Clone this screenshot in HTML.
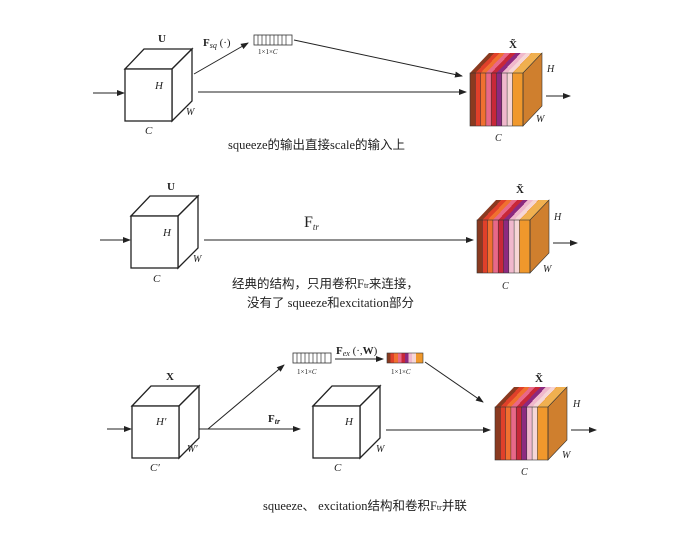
<!DOCTYPE html>
<html><head><meta charset="utf-8"><style>
html,body{margin:0;padding:0;background:#fff;}
svg{display:block;}
.t{font-family:"Liberation Serif",serif;fill:#222;}
.c{font-family:"Liberation Serif","Noto Sans CJK SC",serif;fill:#222;font-size:12.5px;}
</style></head><body>
<svg width="700" height="559" viewBox="0 0 700 559" xmlns="http://www.w3.org/2000/svg">
<defs>
<linearGradient id="st" x1="0" y1="0" x2="1" y2="0">
<stop offset="0" stop-color="#8a3a20"/><stop offset=".1" stop-color="#8a3a20"/>
<stop offset=".1" stop-color="#e0402a"/><stop offset=".2" stop-color="#e0402a"/>
<stop offset=".2" stop-color="#f07030"/><stop offset=".3" stop-color="#f07030"/>
<stop offset=".3" stop-color="#e86888"/><stop offset=".4" stop-color="#e86888"/>
<stop offset=".4" stop-color="#c82838"/><stop offset=".5" stop-color="#c82838"/>
<stop offset=".5" stop-color="#8c2a80"/><stop offset=".6" stop-color="#8c2a80"/>
<stop offset=".6" stop-color="#f0b8cc"/><stop offset=".7" stop-color="#f0b8cc"/>
<stop offset=".7" stop-color="#f6d6d6"/><stop offset=".8" stop-color="#f6d6d6"/>
<stop offset=".8" stop-color="#f0982c"/><stop offset="1" stop-color="#f0982c"/>
</linearGradient>
<g id="cc">
<rect x="0" y="-20" width="53" height="20" fill="url(#st)" transform="matrix(1,0,-0.95,1,0,0)"/>
<rect x="0" y="0" width="53" height="53" fill="url(#st)"/>
<g stroke="#333" stroke-width=".5">
<line x1="5.3" y1="0" x2="5.3" y2="53"/><line x1="10.6" y1="0" x2="10.6" y2="53"/><line x1="15.9" y1="0" x2="15.9" y2="53"/><line x1="21.2" y1="0" x2="21.2" y2="53"/><line x1="26.5" y1="0" x2="26.5" y2="53"/><line x1="31.8" y1="0" x2="31.8" y2="53"/><line x1="37.1" y1="0" x2="37.1" y2="53"/><line x1="42.4" y1="0" x2="42.4" y2="53"/>
</g>
<polygon points="43,0 53,0 72,-20 62,-20" fill="#f0b050"/>
<polygon points="53,0 72,-20 72,33 53,53" fill="#cf7f2e" stroke="#333" stroke-width=".6"/>
<rect x="0" y="0" width="53" height="53" fill="none" stroke="#333" stroke-width=".6"/>
</g>
<g id="wc" fill="#fff" stroke="#222" stroke-width="1.3">
<polygon points="0,0 19,-20 67,-20 47,0"/>
<polygon points="47,0 67,-20 67,32 47,52"/>
<rect x="0" y="0" width="47" height="52"/>
</g>
<marker id="ar" markerWidth="8" markerHeight="6" refX="7" refY="3" orient="auto" markerUnits="userSpaceOnUse"><path d="M0,0 L8,3 L0,6 Z" fill="#222"/></marker>
<g id="bar"><rect x="0" y="0" width="38" height="10" fill="#fff" stroke="#333" stroke-width=".8"/>
<g stroke="#333" stroke-width=".7"><line x1="4" y1="0" x2="4" y2="10"/><line x1="8" y1="0" x2="8" y2="10"/><line x1="12" y1="0" x2="12" y2="10"/><line x1="16" y1="0" x2="16" y2="10"/><line x1="20" y1="0" x2="20" y2="10"/><line x1="24" y1="0" x2="24" y2="10"/><line x1="28" y1="0" x2="28" y2="10"/><line x1="32" y1="0" x2="32" y2="10"/></g></g>
</defs>

<g stroke="#222" stroke-width="1" fill="none" marker-end="url(#ar)">
<line x1="93" y1="93" x2="124" y2="93"/>
<line x1="194" y1="74" x2="248" y2="43"/>
<line x1="294" y1="40" x2="462" y2="76"/>
<line x1="198" y1="92" x2="466" y2="92"/>
<line x1="546" y1="96" x2="570" y2="96"/>
<line x1="100" y1="240" x2="130" y2="240"/>
<line x1="204" y1="240" x2="473" y2="240"/>
<line x1="553" y1="243" x2="577" y2="243"/>
<line x1="107" y1="429" x2="131" y2="429"/>
<line x1="196" y1="429" x2="300" y2="429"/>
<line x1="208" y1="429" x2="284" y2="365"/>
<line x1="335" y1="359" x2="383" y2="359"/>
<line x1="425" y1="362" x2="483" y2="402"/>
<line x1="386" y1="430" x2="490" y2="430"/>
<line x1="571" y1="430" x2="596" y2="430"/>
</g>

<use href="#wc" x="125" y="69"/>
<text class="t" x="158" y="42" font-weight="bold" font-size="11">U</text>
<text class="t" x="155" y="89" font-style="italic" font-size="11">H</text>
<text class="t" x="186" y="115" font-style="italic" font-size="10">W</text>
<text class="t" x="145" y="134" font-style="italic" font-size="11">C</text>
<text class="t" x="203" y="46" font-size="11"><tspan font-weight="bold">F</tspan><tspan font-style="italic" font-size="8" dy="2">sq</tspan><tspan dy="-2"> (·)</tspan></text>
<use href="#bar" x="254" y="35"/>
<text class="t" x="258" y="54" font-size="7">1×1×<tspan font-style="italic">C</tspan></text>
<use href="#cc" x="470" y="73"/>
<text class="t" x="509" y="48" font-weight="bold" font-size="11">X̃</text>
<text class="t" x="547" y="72" font-style="italic" font-size="10">H</text>
<text class="t" x="536" y="122" font-style="italic" font-size="10">W</text>
<text class="t" x="495" y="141" font-style="italic" font-size="10">C</text>
<text class="c" x="228" y="149">squeeze的输出直接scale的输入上</text>

<use href="#wc" x="131" y="216"/>
<text class="t" x="167" y="190" font-weight="bold" font-size="11">U</text>
<text class="t" x="163" y="236" font-style="italic" font-size="11">H</text>
<text class="t" x="193" y="262" font-style="italic" font-size="10">W</text>
<text class="t" x="153" y="282" font-style="italic" font-size="11">C</text>
<text class="t" x="304" y="227" font-size="16">F<tspan font-style="italic" font-size="9" dy="3">tr</tspan></text>
<use href="#cc" x="477" y="220"/>
<text class="t" x="516" y="193" font-weight="bold" font-size="11">X̃</text>
<text class="t" x="554" y="220" font-style="italic" font-size="10">H</text>
<text class="t" x="543" y="272" font-style="italic" font-size="10">W</text>
<text class="t" x="502" y="289" font-style="italic" font-size="10">C</text>
<text class="c" x="232" y="288">经典的结构，只用卷积F<tspan font-size="8">tr</tspan>来连接，</text>
<text class="c" x="247" y="307">没有了 squeeze和excitation部分</text>

<use href="#wc" x="132" y="406"/>
<text class="t" x="166" y="380" font-weight="bold" font-size="11">X</text>
<text class="t" x="156" y="425" font-style="italic" font-size="11">H′</text>
<text class="t" x="187" y="452" font-style="italic" font-size="10">W′</text>
<text class="t" x="150" y="471" font-style="italic" font-size="11">C′</text>
<use href="#bar" x="293" y="353"/>
<text class="t" x="297" y="374" font-size="7">1×1×<tspan font-style="italic">C</tspan></text>
<text class="t" x="336" y="354" font-size="11"><tspan font-weight="bold">F</tspan><tspan font-style="italic" font-size="8" dy="2">ex</tspan><tspan dy="-2"> (·,</tspan><tspan font-weight="bold">W</tspan>)</text>
<rect x="387" y="353" width="36" height="10" fill="url(#st)" stroke="#333" stroke-width=".6"/>
<text class="t" x="391" y="374" font-size="7">1×1×<tspan font-style="italic">C</tspan></text>
<text class="t" x="268" y="422" font-size="11" font-weight="bold">F<tspan font-style="italic" font-size="8" dy="2">tr</tspan></text>
<use href="#wc" x="313" y="406"/>
<text class="t" x="345" y="425" font-style="italic" font-size="11">H</text>
<text class="t" x="376" y="452" font-style="italic" font-size="10">W</text>
<text class="t" x="334" y="471" font-style="italic" font-size="11">C</text>
<use href="#cc" x="495" y="407"/>
<text class="t" x="535" y="382" font-weight="bold" font-size="11">X̃</text>
<text class="t" x="573" y="407" font-style="italic" font-size="10">H</text>
<text class="t" x="562" y="458" font-style="italic" font-size="10">W</text>
<text class="t" x="521" y="475" font-style="italic" font-size="10">C</text>
<text class="c" x="263" y="510">squeeze、 excitation结构和卷积F<tspan font-size="8">tr</tspan>并联</text>
</svg>
</body></html>
